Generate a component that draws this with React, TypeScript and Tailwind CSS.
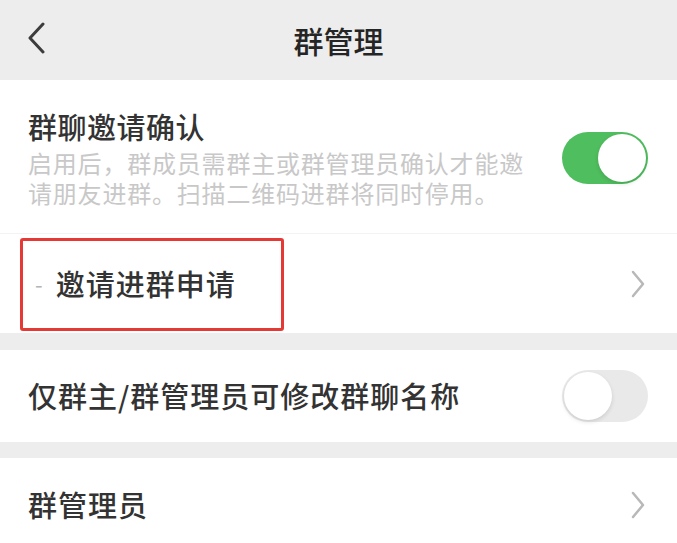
import { useState } from "react";

function Toggle({ on, onClick }: { on: boolean; onClick: () => void }) {
  return (
    <button
      onClick={onClick}
      className={`relative w-[86px] h-[52px] rounded-full shrink-0 ${
        on ? "bg-[#4fbe5e]" : "bg-[#e9e9e9]"
      }`}
    >
      <span
        className={`absolute top-[2px] w-[48px] h-[48px] rounded-full bg-white shadow-[0_2px_4px_rgba(0,0,0,0.12)] ${
          on ? "left-[36px]" : "left-[2px]"
        }`}
      />
    </button>
  );
}

function Chevron() {
  return (
    <svg width="14" height="28" viewBox="0 0 14 28" className="shrink-0">
      <path
        d="M2 2 L12 14 L2 26"
        fill="none"
        stroke="#b8b8b8"
        strokeWidth="2.5"
        strokeLinecap="round"
        strokeLinejoin="round"
      />
    </svg>
  );
}

function App() {
  const [confirm, setConfirm] = useState(true);
  const [rename, setRename] = useState(false);

  return (
    <div className="w-[677px] h-[543px] overflow-hidden bg-[#ededed] font-['Noto_Sans_CJK_SC',sans-serif] text-[#333333]">
      <header className="h-[80px] flex items-center relative">
        <svg
          width="20"
          height="32"
          viewBox="0 0 20 32"
          className="absolute left-[26px] top-[22px]"
        >
          <path
            d="M17 2 L4 16 L17 30"
            fill="none"
            stroke="#3c3c3c"
            strokeWidth="3"
            strokeLinecap="round"
            strokeLinejoin="round"
          />
        </svg>
        <h1 className="flex-1 text-center text-[30px] font-medium text-[#252525] leading-none">
          群管理
        </h1>
      </header>

      <section className="bg-white">
        <div className="flex items-center pl-[28px] pr-[29px] pt-[28px] pb-[25px] border-b border-[#f3f3f3]">
          <div className="flex-1">
            <div className="text-[29px] leading-[36px] font-medium tracking-[0.5px]">群聊邀请确认</div>
            <p className="mt-[4px] text-[24px] leading-[30px] text-[#c8c8c8] tracking-[0.8px] w-[520px]">
              启用后，群成员需群主或群管理员确认才能邀请朋友进群。扫描二维码进群将同时停用。
            </p>
          </div>
          <Toggle on={confirm} onClick={() => setConfirm(!confirm)} />
        </div>

        <div className="relative h-[99px] flex items-center pl-[35px] pr-[32px]">
          <span className="text-[22px] text-[#b5b5b5] mr-[13px]">-</span>
          <span className="flex-1 text-[29px] font-medium tracking-[1px]">邀请进群申请</span>
          <Chevron />
          <div className="absolute left-[20px] top-[4px] w-[264px] h-[93px] border-[3px] border-[#e53935] rounded-[3px]" />
        </div>
      </section>

      <div className="h-[17px]" />

      <section className="bg-white h-[92px] flex items-center pl-[28px] pr-[29px]">
        <span className="flex-1 text-[29px] font-medium tracking-[1px]">
          仅群主/群管理员可修改群聊名称
        </span>
        <Toggle on={rename} onClick={() => setRename(!rename)} />
      </section>

      <div className="h-[16px]" />

      <section className="bg-white h-[94px] flex items-center pl-[28px] pr-[32px]">
        <span className="flex-1 text-[29px] font-medium tracking-[1px]">群管理员</span>
        <Chevron />
      </section>
    </div>
  );
}

export default App;
